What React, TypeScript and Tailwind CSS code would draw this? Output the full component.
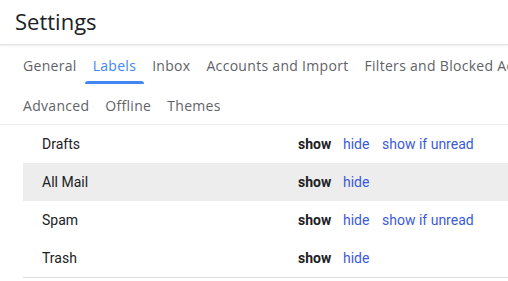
import React from "react";

const tabsTop = ["General", "Labels", "Inbox", "Accounts and Import", "Filters and Blocked Addresses"];
const tabsBottom = ["Advanced", "Offline", "Themes"];

const rows = [
  { name: "Drafts", unread: true, active: false },
  { name: "All Mail", unread: false, active: true },
  { name: "Spam", unread: true, active: false },
  { name: "Trash", unread: false, active: false },
];

function Tab({ label, active }: { label: string; active?: boolean }) {
  return (
    <div
      className={`relative h-full flex items-center px-2 whitespace-nowrap ${
        active ? "text-[#4285f4]" : "text-[#5f6368]"
      }`}
    >
      {label}
      {active && (
        <span className="absolute left-0 right-0 bottom-[1px] h-[3px] rounded-t bg-[#4285f4]" />
      )}
    </div>
  );
}

export default function App() {
  return (
    <div className="w-[508px] h-[281px] overflow-hidden bg-white text-[#202124] font-['Roboto',sans-serif]">
      <header className="h-[45px] flex items-center pl-[15px] border-b border-[#e4e4e4] shadow-[0_1px_2px_rgba(0,0,0,0.08)] relative">
        <h1 className="text-[22px] font-['Open_Sans',sans-serif] text-[#202124] -mt-[1px]">Settings</h1>
      </header>

      <nav className="font-['Open_Sans',sans-serif] text-[14px] font-medium tracking-[0.3px] border-b border-[#ededed]">
        <div className="h-[40px] flex pl-[15px] pt-[1px]">
          {tabsTop.map((t) => (
            <Tab key={t} label={t} active={t === "Labels"} />
          ))}
        </div>
        <div className="h-[39px] flex pl-[15px] pt-[1px]">
          {tabsBottom.map((t) => (
            <Tab key={t} label={t} />
          ))}
        </div>
      </nav>

      <div className="ml-[23px] text-[14px] border-b border-[#e0e0e0]">
        {rows.map((r) => (
          <div
            key={r.name}
            className={`h-[38px] flex items-center pl-[19px] ${r.active ? "bg-[#ededed]" : ""}`}
          >
            <span className="w-[256px]">{r.name}</span>
            <span className="font-bold w-[45px]">show</span>
            <span className="text-[#3b5bdb] w-[39px]">hide</span>
            {r.unread && <span className="text-[#3b5bdb]">show if unread</span>}
          </div>
        ))}
      </div>
    </div>
  );
}
